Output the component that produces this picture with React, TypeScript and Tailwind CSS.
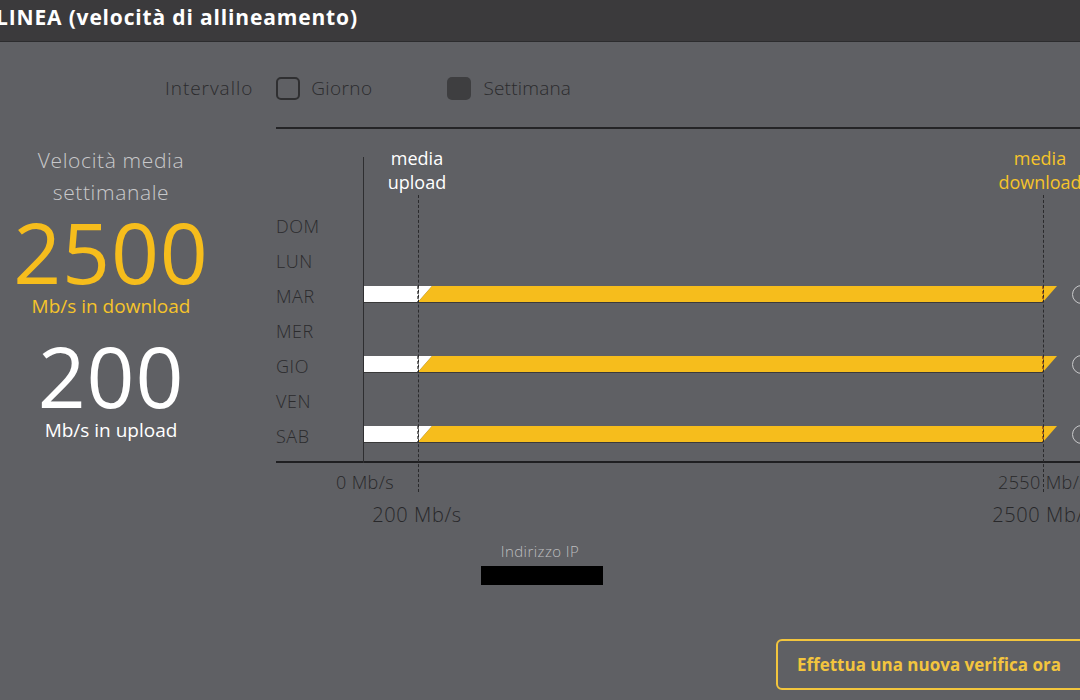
import React from "react";

const days = ["DOM", "LUN", "MAR", "MER", "GIO", "VEN", "SAB"];
const withBar = new Set(["MAR", "GIO", "SAB"]);

function Bar() {
  // plot starts at x=363; upload tick at 418 (55), download tick at 1043 (680)
  return (
    <svg width="695" height="18" viewBox="0 0 695 18" className="block">
      <polygon points="0,1 69,1 55,17 0,17" fill="#ffffff" />
      <polygon points="69,1 694,1 680,17 55,17" fill="#f6bd1c" />
      <line x1="0" y1="17.5" x2="680" y2="17.5" stroke="#3a3a3a" strokeWidth="1" />
      <line x1="55" y1="1" x2="55" y2="17" stroke="#222" strokeWidth="1.2" strokeDasharray="3 2" />
      <line x1="680" y1="1" x2="680" y2="17" stroke="#7a2a10" strokeWidth="1.2" strokeDasharray="3 2" />
    </svg>
  );
}

export default function App() {
  return (
    <div
      className="w-[1080px] h-[700px] overflow-hidden bg-[#5f6064] flex flex-col"
      style={{ fontFamily: '"Open Sans", "Noto Sans", sans-serif' }}
    >
      {/* Header */}
      <div className="h-[42px] bg-[#3b3a3c] flex items-center shrink-0 border-b border-[#2c2c2e] pb-[6px]">
        <div className="ml-[-4px] text-white font-bold text-[21px] tracking-[0.04em] leading-none whitespace-nowrap">
          LINEA (velocità di allineamento)
        </div>
      </div>

      {/* Interval row */}
      <div className="h-[85px] flex items-center pl-[165px] pt-[8px]">
        <span className="text-[#2b2b2d] text-[19px] font-light tracking-[0.05em]">Intervallo</span>
        <div className="ml-[23px] w-[24px] h-[23px] rounded-[5px] border-2 border-[#2f2f31]" />
        <span className="ml-[11px] text-[#2b2b2d] text-[19px] font-light tracking-[0.02em]">Giorno</span>
        <div className="ml-[75px] w-[24px] h-[23px] rounded-[5px] bg-[#3e3e40]" />
        <span className="ml-[12px] text-[#2b2b2d] text-[19px] font-light tracking-[0.01em]">Settimana</span>
      </div>

      <div className="flex flex-1">
        {/* Left summary */}
        <div className="w-[276px] shrink-0">
          <div className="w-[222px] flex flex-col items-center pt-[17px]">
            <div className="text-[#c9c9cb] text-[21px] font-light leading-[32px] text-center tracking-[0.03em]">
              Velocità media
              <br />
              settimanale
            </div>
            <div className="mt-[4px] text-[#f6bd1c] text-[84px] leading-[80px] tracking-[0.01em]">2500</div>
            <div className="text-[#f6c42a] text-[19px] leading-[26px] mt-[1px]">Mb/s in download</div>
            <div className="mt-[17px] text-white text-[84px] leading-[80px] tracking-[0.01em]">200</div>
            <div className="text-white text-[19px] leading-[26px] mt-[1px]">Mb/s in upload</div>
          </div>
        </div>

        {/* Chart */}
        <div className="flex-1 flex flex-col">
          <div className="border-t-2 border-[#242426] relative">
            {/* overlay lines */}
            <div className="absolute left-[87px] top-[28px] h-[306px] w-px bg-[#2e2e30]" />
            <div className="absolute left-[142px] top-[66px] h-[297px] border-l border-dashed border-[#2a2a2c]" />
            <div className="absolute left-[767px] top-[66px] h-[297px] border-l border-dashed border-[#2a2a2c]" />
            <div className="absolute left-[141px] top-[17px] -translate-x-1/2 text-white text-[18px] leading-[24px] text-center">
              media
              <br />
              upload
            </div>
            <div className="absolute left-[764px] top-[17px] -translate-x-1/2 text-[#f6c42a] text-[18px] leading-[24px] text-center">
              media
              <br />
              download
            </div>

            <div className="pt-[80px] pb-[7px] border-b-2 border-[#1f1f21]">
              {days.map((d) => (
                <div key={d} className="h-[35px] flex items-center">
                  <div className="w-[87px] text-[#2b2b2d] text-[18px] font-light tracking-[0.03em]">{d}</div>
                  {withBar.has(d) && (
                    <div className="flex items-center mt-[-5px]">
                      <Bar />
                      <div className="ml-[14px] w-[19px] h-[19px] rounded-full border border-[#c8c8ca]" />
                    </div>
                  )}
                </div>
              ))}
            </div>

            {/* axis labels */}
            <div className="relative h-[70px]">
              <div className="absolute left-[89px] top-[6px] -translate-x-1/2 text-[#28282a] text-[18px] font-light whitespace-nowrap tracking-[0.02em]">
                0 Mb/s
              </div>
              <div className="absolute left-[767px] top-[6px] -translate-x-1/2 text-[#28282a] text-[18px] font-light whitespace-nowrap tracking-[0.02em]">
                2550 Mb/s
              </div>
              <div className="absolute left-[141px] top-[37px] -translate-x-1/2 text-[#28282a] text-[20px] font-light whitespace-nowrap tracking-[0.03em]">
                200 Mb/s
              </div>
              <div className="absolute left-[767px] top-[37px] -translate-x-1/2 text-[#28282a] text-[20px] font-light whitespace-nowrap tracking-[0.03em]">
                2500 Mb/s
              </div>
            </div>
          </div>
        </div>
      </div>

      {/* IP */}
      <div className="absolute top-[540px] left-0 w-[1080px] flex flex-col items-center pointer-events-none">
        <div className="text-[#bdbdbf] text-[15px] font-light tracking-[0.03em]">Indirizzo IP</div>
        <div className="mt-[3px] w-[122px] h-[19px] bg-black ml-[4px]" />
      </div>

      {/* Button */}
      <div className="absolute top-[639px] left-[776px] w-[330px] h-[51px] rounded-[6px] border-2 border-[#f2c53d] flex items-center pl-[19px]">
        <span className="text-[#f3c53e] font-bold text-[17px]">Effettua una nuova verifica ora</span>
      </div>
    </div>
  );
}
